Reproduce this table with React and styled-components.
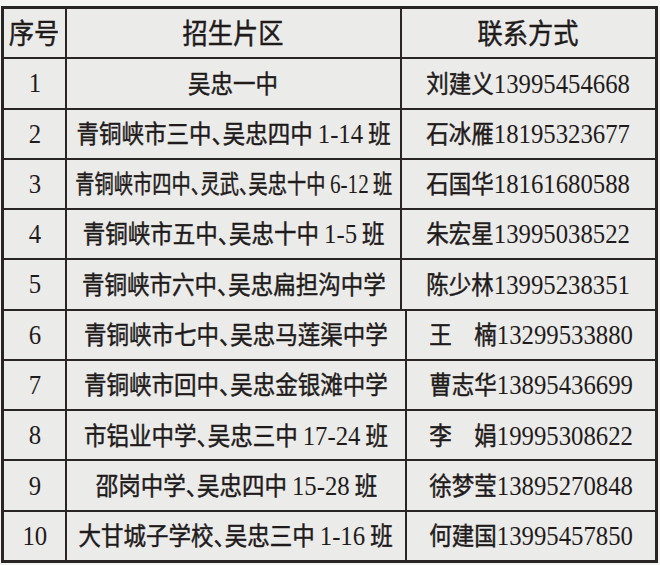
import React from 'react'
import styled, { createGlobalStyle } from 'styled-components'

const Global = createGlobalStyle`
  html, body {
    margin: 0;
    padding: 0;
    background: #f4f4f3;
  }
`

const Page = styled.div`
  width: 660px;
  height: 565px;
  padding: 6px 2px 2px 1px;
  box-sizing: border-box;
`

const Table = styled.div`
  height: 557px;
  box-sizing: border-box;
  display: flex;
  flex-direction: column;
  gap: 2px;
  padding: 3px;
  background: #2a2525;
`

const Row = styled.div`
  flex: 1;
  display: grid;
  grid-template-columns: 61px ${p => p.$mid}px 1fr;
  gap: 2px;
`

const Cell = styled.div`
  background: #ebebea;
  display: flex;
  align-items: center;
  justify-content: center;
  min-width: 0;
`

const Text = styled.span`
  display: inline-block;
  white-space: nowrap;
  color: #1f1b1b;
  font-family: "Liberation Serif", "Noto Sans CJK SC", serif;
  font-weight: 400;
  font-size: ${p => p.$size || 25}px;
  font-feature-settings: "halt";
  transform: scaleX(${p => p.$sx || 0.9});
  transform-origin: center;
  line-height: 1;
`

const Han = styled.span`
  font-family: "Noto Sans CJK SC", sans-serif;
  -webkit-text-stroke: 0.45px #1f1b1b;
`

const Digits = styled.span`
  font-family: "Liberation Serif", serif;
  font-size: 27.5px;
`

// digits in the mixed strings are set a little larger than the hanzi, as in the print
function Mixed({ text }) {
  return text.split(/([0-9-]+)/).map((part, i) =>
    i % 2 ? <Digits key={i}>{part}</Digits> : <Han key={i}>{part}</Han>
  )
}

const topRows = [
  ['1', '吴忠一中', '刘建义', '13995454668'],
  ['2', '青铜峡市三中、吴忠四中 1-14 班', '石冰雁', '18195323677'],
  ['3', '青铜峡市四中、灵武、吴忠十中 6-12 班', '石国华', '18161680588', 0.77],
  ['4', '青铜峡市五中、吴忠十中 1-5 班', '朱宏星', '13995038522'],
  ['5', '青铜峡市六中、吴忠扁担沟中学', '陈少林', '13995238351'],
]

const bottomRows = [
  ['6', '青铜峡市七中、吴忠马莲渠中学', '王　楠', '13299533880'],
  ['7', '青铜峡市回中、吴忠金银滩中学', '曹志华', '13895436699'],
  ['8', '市铝业中学、吴忠三中 17-24 班', '李　娟', '19995308622'],
  ['9', '邵岗中学、吴忠四中 15-28 班', '徐梦莹', '13895270848'],
  ['10', '大甘城子学校、吴忠三中 1-16 班', '何建国', '13995457850'],
]

function DataRow({ row, mid }) {
  const [no, area, name, phone, squeeze] = row
  return (
    <Row $mid={mid}>
      <Cell>
        <Text $size={28}><Digits>{no}</Digits></Text>
      </Cell>
      <Cell>
        <Text $sx={squeeze}><Mixed text={area} /></Text>
      </Cell>
      <Cell>
        <Text>
          <Han>{name}</Han>
          <Digits>{phone}</Digits>
        </Text>
      </Cell>
    </Row>
  )
}

export default function App() {
  return (
    <Page>
      <Global />
      <Table>
        <Row $mid={333}>
          <Cell><Text $size={28}><Han>序号</Han></Text></Cell>
          <Cell><Text $size={28}><Han>招生片区</Han></Text></Cell>
          <Cell><Text $size={28}><Han>联系方式</Han></Text></Cell>
        </Row>
        {topRows.map(r => <DataRow key={r[0]} row={r} mid={333} />)}
        {bottomRows.map(r => <DataRow key={r[0]} row={r} mid={338} />)}
      </Table>
    </Page>
  )
}
